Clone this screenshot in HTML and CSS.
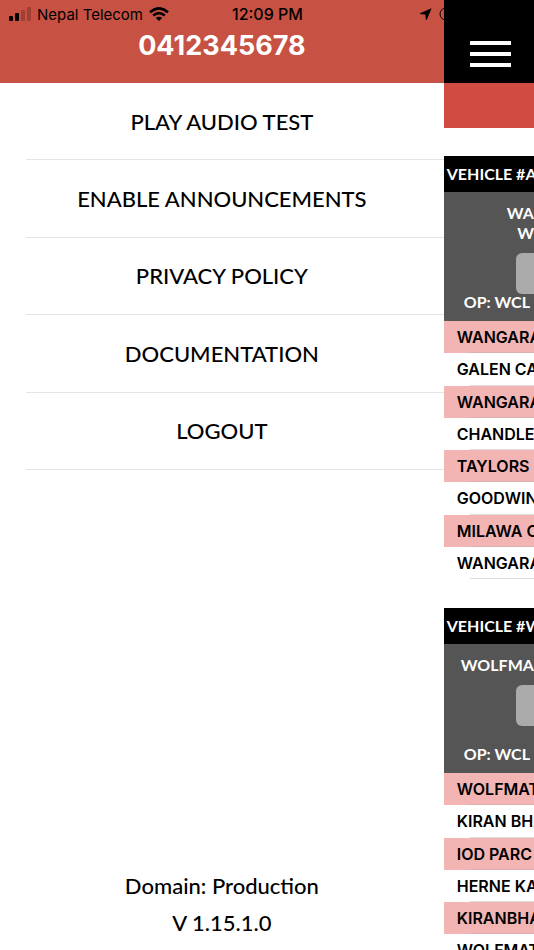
FILE: index.html
```html
<!DOCTYPE html>
<html lang="en">
<head>
<meta charset="utf-8">
<meta name="viewport" content="width=device-width, initial-scale=1">
<title>Menu</title>
<link rel="stylesheet" href="styles.css">
</head>
<body>
<div class="app">
  <aside class="drawer">
    <header class="drawer-header">
      <div class="status">
        <div class="carrier">
          <svg class="signal" width="22" height="14" viewBox="0 0 22 14" aria-hidden="true">
            <rect x="0" y="9" width="4" height="5" rx="1"/>
            <rect x="6" y="6" width="4" height="8" rx="1"/>
            <rect x="12" y="3" width="4" height="11" rx="1" opacity=".2"/>
            <rect x="18" y="0" width="4" height="14" rx="1" opacity=".2"/>
          </svg>
          <span>Nepal Telecom</span>
          <svg width="20" height="14" viewBox="0 0 20 14" fill="none" stroke="#000" stroke-width="2.6" aria-hidden="true">
            <path d="M1 5.2Q10 -2.6 19 5.2"/>
            <path d="M4.2 8.6Q10 3.6 15.8 8.6"/>
            <path d="M10 14L6.8 11Q10 8.4 13.2 11Z" fill="#000" stroke="none"/>
          </svg>
        </div>
        <time class="clock">12:09 PM</time>
        <div class="indicators">
          <svg width="12" height="12" viewBox="0 0 12 12" aria-hidden="true"><path d="M11.6 0.2L0 5.2Q0 6 0.6 6.2L5.4 6.6L5.8 11.4Q6.4 12 6.9 11.4Z"/></svg>
          <svg width="5" height="14" viewBox="0 0 5 14" fill="none" stroke="#000" aria-hidden="true"><circle cx="7" cy="7" r="6"/></svg>
        </div>
      </div>
      <h1 class="phone">0412345678</h1>
    </header>
    <nav>
      <ul class="menu">
        <li><a href="#audio">PLAY AUDIO TEST</a></li>
        <li><a href="#announcements">ENABLE ANNOUNCEMENTS</a></li>
        <li><a href="#privacy">PRIVACY POLICY</a></li>
        <li><a href="#documentation">DOCUMENTATION</a></li>
        <li><a href="#logout">LOGOUT</a></li>
      </ul>
    </nav>
    <footer class="about">
      <p>Domain: Production</p>
      <p>V 1.15.1.0</p>
    </footer>
  </aside>
  <main class="page">
    <div class="topbar">
      <button class="burger" type="button" aria-label="Menu">
        <svg width="41" height="26" viewBox="0 0 41 26" fill="#fff" aria-hidden="true"><rect width="41" height="4"/><rect y="11" width="41" height="4"/><rect y="22" width="41" height="4"/></svg>
      </button>
    </div>
    <div class="banner"></div>
    <section class="vehicle">
      <h2>VEHICLE #A</h2>
      <div class="summary">
        <p class="route route-double"><span>WA</span><span>W</span></p>
        <button class="action" type="button" aria-label="Open vehicle"></button>
        <p class="operator">OP: WCL</p>
      </div>
      <ul class="stops">
        <li>WANGARA</li>
        <li>GALEN CA</li>
        <li>WANGARA</li>
        <li>CHANDLE</li>
        <li>TAYLORS</li>
        <li>GOODWIN</li>
        <li>MILAWA C</li>
        <li>WANGARA</li>
      </ul>
    </section>
    <section class="vehicle">
      <h2>VEHICLE #W</h2>
      <div class="summary">
        <p class="route">WOLFMA</p>
        <button class="action" type="button" aria-label="Open vehicle"></button>
        <p class="operator">OP: WCL</p>
      </div>
      <ul class="stops">
        <li>WOLFMAT</li>
        <li>KIRAN BHA</li>
        <li>IOD PARC</li>
        <li>HERNE KA</li>
        <li>KIRANBHA</li>
        <li>WOLFMAT</li>
      </ul>
    </section>
  </main>
</div>
</body>
</html>
```
FILE: styles.css
```css
* {
  box-sizing: border-box;
  margin: 0;
  padding: 0;
}

body {
  background: #fff;
  color: #000;
  font-family: Lato, sans-serif;
}

ul {
  list-style: none;
}

button {
  border: 0;
  background: none;
}

.app {
  display: grid;
  grid-template-columns: 831fr 169fr;
  height: 100vh;
  overflow: hidden;
}

.drawer {
  display: flex;
  flex-direction: column;
  min-width: 0;
  min-height: 0;
}

.drawer-header {
  height: 83px;
  background: #c75143;
  font-family: Inter, sans-serif;
}

.status {
  display: grid;
  grid-template-columns: auto auto 1fr;
  align-items: center;
  height: 28px;
  padding-left: 9px;
  font-size: 15px;
  white-space: nowrap;
}

.carrier,
.indicators {
  display: flex;
  align-items: center;
}

.carrier {
  gap: 6px;
}

.indicators {
  justify-content: flex-end;
  gap: 7px;
}

.clock {
  padding-left: 63px;
  font-size: 16px;
  font-weight: 500;
}

.phone {
  font-size: 27px;
  line-height: 36px;
  font-weight: 700;
  color: #fff;
  text-align: center;
}

.menu {
  display: grid;
  grid-auto-rows: 1fr;
  height: 387px;
  margin-left: 26px;
}

.menu li {
  border-bottom: 1px solid #e4e4e4;
}

.menu a {
  display: flex;
  align-items: center;
  justify-content: center;
  height: 100%;
  padding-right: 26px;
  color: inherit;
  text-decoration: none;
  font-size: 22px;
  font-weight: 500;
}

.about {
  margin-top: auto;
  padding-bottom: 9px;
  text-align: center;
  font-size: 22px;
  line-height: 37px;
  font-weight: 500;
}

.page {
  min-width: 0;
  overflow: hidden;
  white-space: nowrap;
}

.topbar {
  height: 83px;
  padding: 41px 0 0 26px;
  background: #000;
}

.burger svg {
  display: block;
}

.banner {
  height: 45px;
  background: #d04b41;
}

.vehicle {
  margin-top: 28px;
}

.stops + .vehicle,
.vehicle + .vehicle {
  margin-top: 29px;
}

.vehicle h2 {
  padding-left: 3px;
  background: #000;
  color: #fff;
  font-size: 16px;
  line-height: 36px;
  font-weight: 700;
}

.summary {
  display: flex;
  flex-direction: column;
  height: 129px;
  padding: 11px 0 12px 17px;
  background: #555;
  color: #fff;
  font-size: 16px;
  font-weight: 700;
}

.route {
  line-height: 20px;
}

.route-double {
  display: flex;
  flex-direction: column;
  align-items: flex-end;
}

.action {
  flex: none;
  width: 100%;
  height: 41px;
  margin: 10px 0 0 55px;
  border-radius: 6px;
  background: #aaa;
}

.operator {
  margin-top: auto;
  padding-left: 3px;
  line-height: 14px;
}

.stops {
  display: grid;
  grid-template-rows: repeat(8, 1fr);
  height: 258px;
}

.stops li {
  display: flex;
  align-items: center;
  padding-left: 13px;
  background: linear-gradient(#ddd, #ddd) 26px 100% / 100% 1px no-repeat;
  font-family: Inter, sans-serif;
  font-size: 16px;
  font-weight: 600;
}

.stops li:nth-child(odd) {
  background-color: #f3b4b4;
  background-image: linear-gradient(#dcb0b0, #dcb0b0);
}
```
